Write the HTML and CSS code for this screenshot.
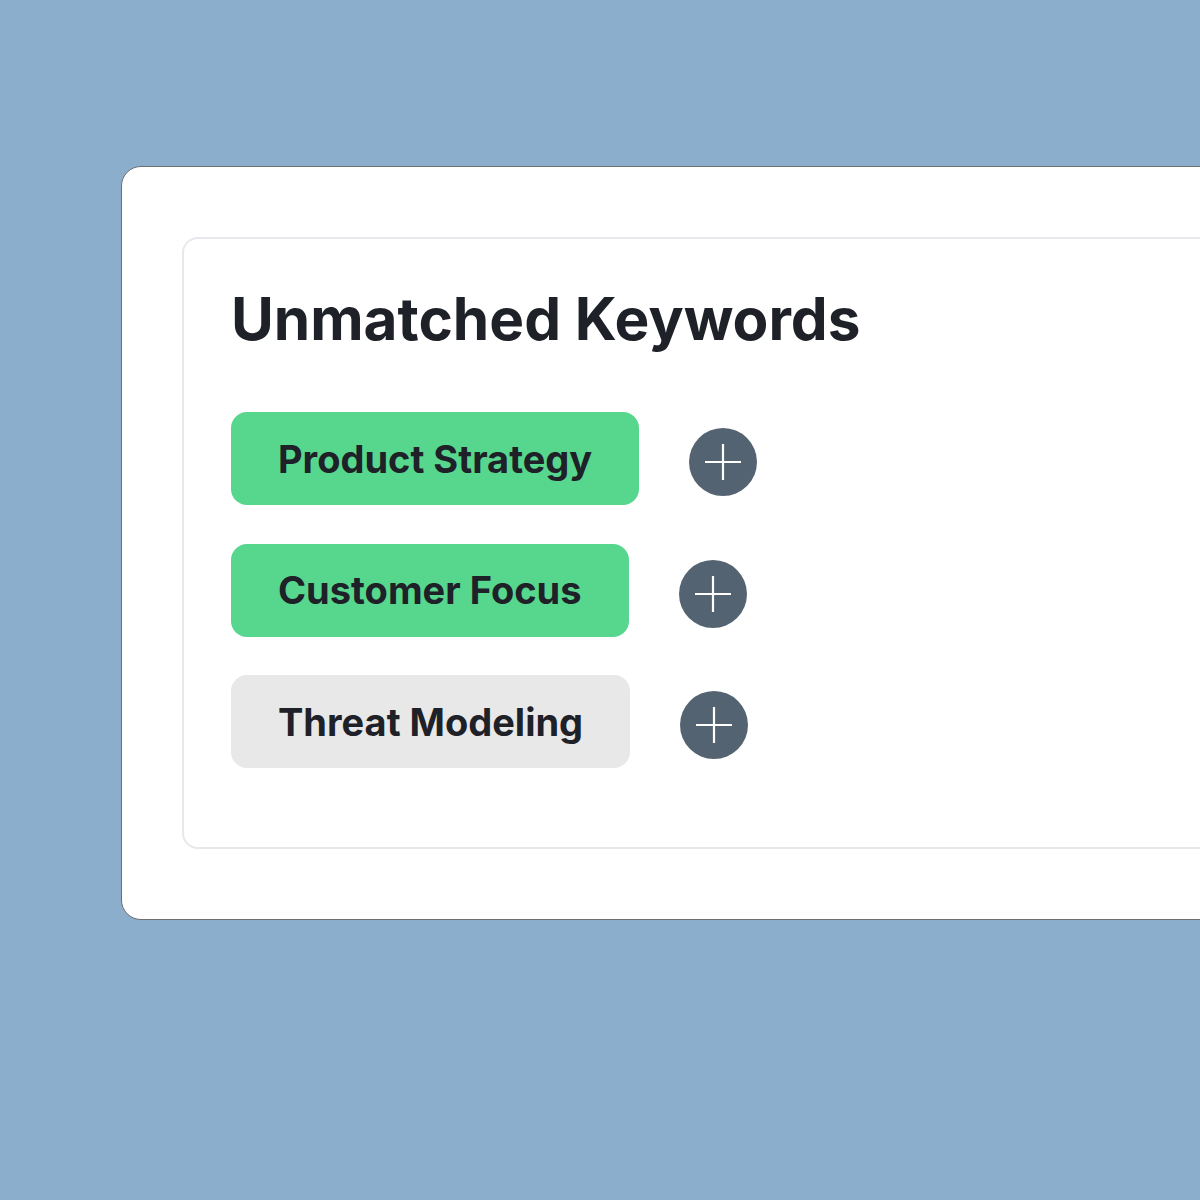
FILE: index.html
```html
<!DOCTYPE html>
<html lang="en">
<head>
<meta charset="utf-8">
<title>Unmatched Keywords</title>
<link rel="stylesheet" href="styles.css">
</head>
<body>
<div class="stage">
  <div class="outer">
    <section class="panel">
      <h2 class="title">Unmatched Keywords</h2>
      <ul class="list">
        <li class="row">
          <span class="chip chip-green">Product Strategy</span>
          <button class="add" aria-label="Add Product Strategy">
            <svg viewBox="0 0 68 68" width="68" height="68"><path d="M34 16V52M16 34H52" stroke="#ffffff" stroke-width="2.2" fill="none"/></svg>
          </button>
        </li>
        <li class="row">
          <span class="chip chip-green">Customer Focus</span>
          <button class="add" aria-label="Add Customer Focus">
            <svg viewBox="0 0 68 68" width="68" height="68"><path d="M34 16V52M16 34H52" stroke="#ffffff" stroke-width="2.2" fill="none"/></svg>
          </button>
        </li>
        <li class="row">
          <span class="chip chip-gray">Threat Modeling</span>
          <button class="add" aria-label="Add Threat Modeling">
            <svg viewBox="0 0 68 68" width="68" height="68"><path d="M34 16V52M16 34H52" stroke="#ffffff" stroke-width="2.2" fill="none"/></svg>
          </button>
        </li>
      </ul>
    </section>
  </div>
</div>
</body>
</html>
```
FILE: styles.css
```css
* { box-sizing: border-box; }
html, body { margin: 0; padding: 0; }
body {
  background: #8baecd;
  font-family: Inter, "Noto Sans", "Liberation Sans", sans-serif;
  width: 1200px;
  height: 1200px;
  overflow: hidden;
}
.stage {
  padding: 166px 0 0 121px;
}
.outer {
  width: 1200px;
  background: #ffffff;
  border: 1px solid #6e6e6e;
  border-radius: 20px;
  padding: 70px 0 70px 60px;
}
.panel {
  border: 2px solid #e6e8eb;
  border-radius: 16px;
  padding: 40px 0 79px 47px;
}
.title {
  margin: 0 0 53px 0;
  font-size: 58.5px;
  line-height: 80px;
  font-weight: 700;
  color: #1e2127;
  letter-spacing: 0;
}
.list {
  list-style: none;
  margin: 0;
  padding: 0;
  display: flex;
  flex-direction: column;
  gap: 38.5px;
}
.row {
  display: flex;
  align-items: center;
  gap: 50px;
}
.chip {
  display: inline-flex;
  align-items: center;
  height: 93px;
  padding: 0 47px;
  border-radius: 16px;
  font-size: 38px;
  font-weight: 700;
  color: #1e2127;
}
.chip-green { background: #57d68d; }
.chip-gray { background: #e8e8e8; }
.add {
  width: 68px;
  height: 68px;
  padding: 0;
  margin-top: 7px;
  border: none;
  border-radius: 50%;
  background: #546372;
  display: flex;
  align-items: center;
  justify-content: center;
}
.add svg { display: block; }
```
